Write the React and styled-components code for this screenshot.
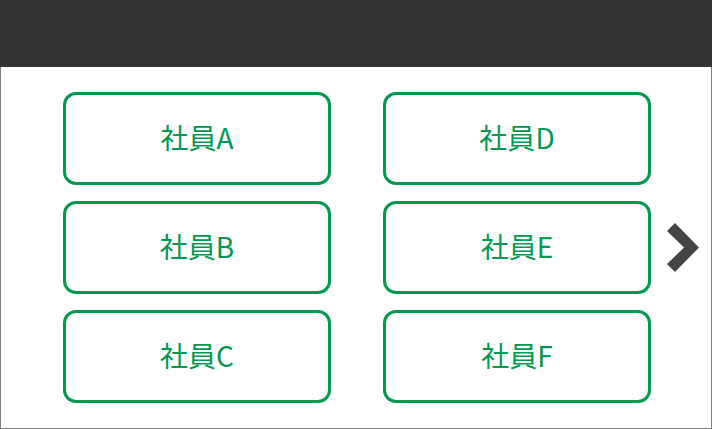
import styled, { createGlobalStyle } from "styled-components";

const GlobalStyle = createGlobalStyle`
  html, body {
    margin: 0;
    padding: 0;
    background: #ffffff;
  }
  body {
    font-family: "Noto Sans CJK JP", "Noto Sans", sans-serif;
  }
`;

const Frame = styled.div`
  width: 712px;
  height: 429px;
  box-sizing: border-box;
  display: flex;
  flex-direction: column;
  overflow: hidden;
`;

const Header = styled.div`
  height: 67px;
  background: #333333;
  flex-shrink: 0;
`;

const Body = styled.div`
  flex: 1;
  border: 1px solid #7f7f7f;
  border-top: none;
  display: flex;
  align-items: flex-start;
  padding: 25px 0 0 62px;
`;

const Grid = styled.div`
  display: grid;
  grid-template-columns: 268px 268px;
  grid-auto-rows: 93px;
  column-gap: 52px;
  row-gap: 16px;
`;

const Staff = styled.button`
  box-sizing: border-box;
  height: 100%;
  border: 3px solid #00994f;
  border-radius: 13px;
  background: #ffffff;
  color: #00994f;
  font-family: "Noto Sans CJK JP", "Noto Sans", sans-serif;
  font-size: 28px;
  line-height: 1;
  display: flex;
  align-items: center;
  justify-content: center;
  padding: 0 0 4px;
  cursor: pointer;
`;

const Next = styled.div`
  align-self: center;
  margin: 0 0 25px 16px;
  display: flex;
`;

const staff = ["A", "D", "B", "E", "C", "F"];

export default function App() {
  return (
    <>
      <GlobalStyle />
      <Frame>
        <Header />
        <Body>
          <Grid>
            {staff.map((s) => (
              <Staff key={s}>社員{s}</Staff>
            ))}
          </Grid>
          <Next>
            <svg width="32" height="50" viewBox="0 0 32 50">
              <polygon points="8,0 32,24.5 8,49 0,41 17,24.5 0,8" fill="#444444" />
            </svg>
          </Next>
        </Body>
      </Frame>
    </>
  );
}
